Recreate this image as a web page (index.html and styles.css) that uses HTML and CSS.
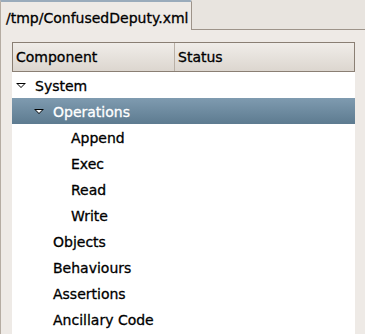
FILE: index.html
```html
<!DOCTYPE html>
<html lang="en">
<head>
    <meta charset="UTF-8">
    <title>ConfusedDeputy.xml</title>
    <link rel="stylesheet" href="styles.css">
</head>
<body>
    <div class="tabs">
        <div class="tab">/tmp/ConfusedDeputy.xml</div>
        <div class="tab-rest"></div>
    </div>
    <div class="panel">
        <div class="tree">
            <div class="header">
                <div class="col col-name">Component</div>
                <div class="col col-status">Status</div>
            </div>
            <div class="row lvl0"><span class="exp"></span>System</div>
            <div class="row lvl1 selected"><span class="exp"></span>Operations</div>
            <div class="row lvl2"><span class="exp none"></span>Append</div>
            <div class="row lvl2"><span class="exp none"></span>Exec</div>
            <div class="row lvl2"><span class="exp none"></span>Read</div>
            <div class="row lvl2"><span class="exp none"></span>Write</div>
            <div class="row lvl1"><span class="exp none"></span>Objects</div>
            <div class="row lvl1"><span class="exp none"></span>Behaviours</div>
            <div class="row lvl1"><span class="exp none"></span>Assertions</div>
            <div class="row lvl1"><span class="exp none"></span>Ancillary Code</div>
        </div>
    </div>
</body>
</html>
```

FILE: styles.css
```css
body {
    margin: 0;
    height: 334px;
    overflow: hidden;
    background: #e8e4df;
    font-family: "DejaVu Sans", sans-serif;
    font-size: 14px;
    color: #000;
    -webkit-text-stroke: 0.3px currentColor;
}
.tabs {
    display: flex;
    height: 30px;
}
.tab {
    width: 185px;
    padding-left: 5px;
    line-height: 32px;
    background: #eeeae6;
    border-top: 2px solid #9aabbb;
    border-left: 1px solid #b5aca2;
    border-right: 1px solid #9d9389;
    border-top-right-radius: 2px;
    box-sizing: content-box;
    height: 28px;
    white-space: nowrap;
}
.tab-rest {
    flex: 1;
    border-bottom: 1px solid #9d9389;
}
.panel {
    height: 304px;
    background: #eeeae6;
    border-left: 1px solid #b5aca2;
    padding: 12px 10px 0 11px;
}
.tree {
    background: #fff;
    height: 292px;
}
.header {
    display: flex;
    height: 28px;
    border: 1px solid #8a7f74;
    background: linear-gradient(#f0ede9, #dcd6cf);
}
.col {
    line-height: 28px;
    padding-left: 3px;
}
.col-name {
    width: 158px;
    border-right: 1px solid #b9b0a6;
}
.col-status {
    flex: 1;
}
.row {
    display: flex;
    align-items: center;
    height: 26px;
    padding-top: 1px;
    box-sizing: border-box;
    white-space: nowrap;
}
.row.lvl0 { padding-left: 4px; }
.row.lvl1 { padding-left: 22px; }
.row.lvl2 { padding-left: 40px; }
.row.selected {
    color: #fff;
    background: linear-gradient(#7f9bb0, #5d7b90);
}
.exp {
    width: 19px;
    height: 24px;
    flex: none;
    position: relative;
}
.exp::before {
    content: "";
    position: absolute;
    left: 0;
    top: 9px;
    border-left: 5px solid transparent;
    border-right: 5px solid transparent;
    border-top: 5px solid #000;
}
.exp::after {
    content: "";
    position: absolute;
    left: 2px;
    top: 10px;
    border-left: 3px solid transparent;
    border-right: 3px solid transparent;
    border-top: 3px solid #fff;
}
.exp.none::before,
.exp.none::after {
    display: none;
}
```
